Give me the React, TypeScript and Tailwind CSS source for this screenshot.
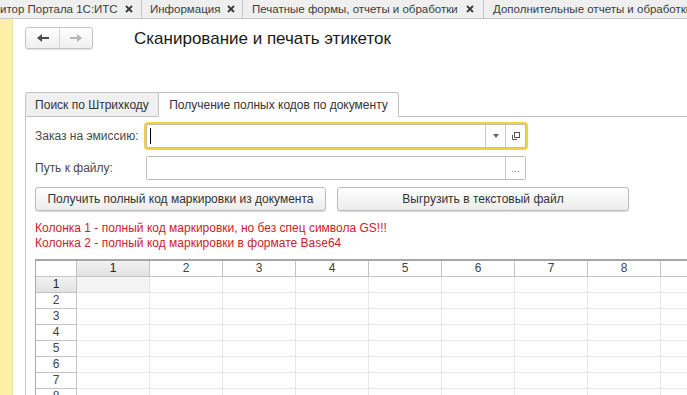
import React from "react";

function CloseX() {
  return (
    <svg width="8" height="8" viewBox="0 0 8 8" className="shrink-0">
      <path d="M1 1 L7 7 M7 1 L1 7" stroke="#3a3a3a" strokeWidth="1.8" />
    </svg>
  );
}

function ArrowLeft({ color }: { color: string }) {
  return (
    <svg width="12" height="8" viewBox="0 0 12 8">
      <polygon points="0,4 5,0 5,8" fill={color} />
      <rect x="4" y="3" width="8" height="2" fill={color} />
    </svg>
  );
}

function ArrowRight({ color }: { color: string }) {
  return (
    <svg width="12" height="8" viewBox="0 0 12 8">
      <polygon points="12,4 7,0 7,8" fill={color} />
      <rect x="0" y="3" width="8" height="2" fill={color} />
    </svg>
  );
}

function OpenIcon() {
  return (
    <svg width="11" height="11" viewBox="0 0 11 11">
      <rect x="4.5" y="1.5" width="5" height="5" fill="none" stroke="#555" strokeWidth="1" />
      <path d="M2.5 4 V8.5 H7" fill="none" stroke="#555" strokeWidth="1" />
    </svg>
  );
}

const cols = [1, 2, 3, 4, 5, 6, 7, 8];
const rows = [1, 2, 3, 4, 5, 6, 7, 8];

export default function App() {
  return (
    <div className="w-[687px] h-[395px] overflow-hidden bg-white font-['Liberation_Sans',Arial,sans-serif] text-[12px] text-[#333] flex flex-col">
      {/* Top tab bar */}
      <div className="flex h-[19px] shrink-0 bg-[#efefef] border-b border-[#c6c6c6] leading-[18px] text-[11.5px] text-[#3c3c3c] whitespace-nowrap">
        <div className="w-[142px] shrink-0 flex items-center justify-between pr-[8px] border-r border-[#c6c6c6]">
          <span>итор Портала 1С:ИТС</span>
          <CloseX />
        </div>
        <div className="w-[101px] shrink-0 flex items-center justify-between pl-[8px] pr-[7px] border-r border-[#c6c6c6]">
          <span>Информация</span>
          <CloseX />
        </div>
        <div className="w-[241px] shrink-0 flex items-center justify-between pl-[9px] pr-[9px] border-r border-[#c6c6c6]">
          <span>Печатные формы, отчеты и обработки</span>
          <CloseX />
        </div>
        <div className="flex-1 overflow-hidden pl-[9px] flex items-center">
          <span>Дополнительные отчеты и обработки</span>
        </div>
      </div>

      {/* Body */}
      <div className="flex flex-1 min-h-0">
        <div className="w-[13px] shrink-0 bg-[#fcefa8] border-r border-[#eadf9c]" />
        <div className="flex-1 min-w-0 pl-[12px] flex flex-col overflow-hidden">
          {/* Nav + title */}
          <div className="flex items-center mt-[8px] h-[22px] shrink-0">
            <div className="w-[68px] h-[22px] flex rounded-[3px] border border-[#c4c4c4] bg-gradient-to-b from-white to-[#efefef] shadow-[0_1px_1px_rgba(0,0,0,0.12)]">
              <div className="w-[34px] flex items-center justify-center border-r border-[#d6d6d6]">
                <ArrowLeft color="#4a4a4a" />
              </div>
              <div className="flex-1 flex items-center justify-center">
                <ArrowRight color="#b4b4b4" />
              </div>
            </div>
            <div className="ml-[41px] mt-[2px] text-[17px] text-[#1a1a1a] leading-[22px] whitespace-nowrap">
              Сканирование и печать этикеток
            </div>
          </div>

          {/* Tabs */}
          <div className="flex items-end h-[25px] mt-[43px] shrink-0 whitespace-nowrap">
            <div className="w-[134px] h-[25px] shrink-0 flex items-center justify-center bg-[#f0f0f0] border border-[#c2c2c2] rounded-tl-[3px] text-[#333]">
              Поиск по Штрихкоду
            </div>
            <div className="w-[240px] h-[25px] shrink-0 flex items-center justify-center bg-white border border-b-0 border-l-0 border-[#c2c2c2] rounded-tr-[3px] text-[#333]">
              Получение полных кодов по документу
            </div>
            <div className="flex-1 h-[25px] border-b border-[#c2c2c2]" />
          </div>

          {/* Panel */}
          <div className="flex-1 border-l border-[#c8c8c8] pl-[9px] flex flex-col min-h-0">
            <div className="flex items-center mt-[7px] h-[24px] shrink-0">
              <div className="w-[111px] shrink-0 text-[#4a4a4a] whitespace-nowrap">Заказ на эмиссию:</div>
              <div className="w-[380px] h-[24px] flex border border-[#bdbdbd] rounded-[2px] bg-white ring-2 ring-[#f2d23c]">
                <div className="flex-1 flex items-center pl-[3px]">
                  <div className="w-[1px] h-[16px] bg-black" />
                </div>
                <div className="w-[20px] flex items-center justify-center border-l border-[#c6c6c6]">
                  <svg width="6" height="4" viewBox="0 0 6 4">
                    <polygon points="0,0 6,0 3,4" fill="#666" />
                  </svg>
                </div>
                <div className="w-[20px] flex items-center justify-center border-l border-[#c6c6c6]">
                  <OpenIcon />
                </div>
              </div>
            </div>

            <div className="flex items-center mt-[8px] h-[24px] shrink-0">
              <div className="w-[111px] shrink-0 text-[#4a4a4a] whitespace-nowrap">Путь к файлу:</div>
              <div className="w-[380px] h-[24px] flex border border-[#bdbdbd] rounded-[2px] bg-white">
                <div className="flex-1" />
                <div className="w-[20px] flex items-end justify-center pb-[5px] border-l border-[#c6c6c6] text-[10px] leading-[10px] text-[#777]">
                  ...
                </div>
              </div>
            </div>

            <div className="flex mt-[7px] gap-[11px] shrink-0">
              <div className="w-[291px] h-[24px] flex items-center justify-center rounded-[3px] border border-[#bcbcbc] bg-gradient-to-b from-white to-[#ececec] shadow-[0_1px_1px_rgba(0,0,0,0.15)] text-[#333] whitespace-nowrap">
                Получить полный код маркировки из документа
              </div>
              <div className="w-[292px] h-[24px] flex items-center justify-center rounded-[3px] border border-[#bcbcbc] bg-gradient-to-b from-white to-[#ececec] shadow-[0_1px_1px_rgba(0,0,0,0.15)] text-[#333] whitespace-nowrap">
                Выгрузить в текстовый файл
              </div>
            </div>

            <div className="mt-[10px] text-[#d0202a] leading-[15px] whitespace-nowrap shrink-0">
              <div>Колонка 1 - полный код маркировки, но без спец символа GS!!!</div>
              <div>Колонка 2 - полный код маркировки в формате Base64</div>
            </div>

            {/* Spreadsheet */}
            <div className="mt-[8px] border-l border-[#a8a8a8] flex flex-col shrink-0">
              <div className="flex h-[18px] border-t-2 border-[#a6a6a6]">
                <div className="w-[41px] shrink-0 border-r border-b border-[#c4c4c4] bg-white" />
                {cols.map((c) => (
                  <div
                    key={c}
                    className={
                      c === 1
                        ? "w-[73px] shrink-0 flex items-center justify-center border-r border-b border-[#c4c4c4] bg-gradient-to-b from-[#f2f2f2] to-[#e2e2e2] text-[#222] leading-[15px]"
                        : "w-[73px] shrink-0 flex items-center justify-center border-r border-b border-[#c4c4c4] bg-white text-[#444] leading-[15px]"
                    }
                  >
                    {c}
                  </div>
                ))}
                <div className="w-[73px] shrink-0 border-b border-[#c4c4c4] bg-white" />
              </div>
              {rows.map((r) => (
                <div key={r} className="flex h-[16px]">
                  <div
                    className={
                      r === 1
                        ? "w-[41px] shrink-0 flex items-center justify-center border-r border-b border-[#c4c4c4] bg-gradient-to-b from-[#f2f2f2] to-[#e2e2e2] text-[#222] leading-[15px]"
                        : "w-[41px] shrink-0 flex items-center justify-center border-r border-b border-[#c4c4c4] bg-white text-[#444] leading-[15px]"
                    }
                  >
                    {r}
                  </div>
                  {cols.map((c) => (
                    <div
                      key={c}
                      className={
                        r === 1 && c === 1
                          ? "w-[73px] shrink-0 border-r border-b border-[#e4e4e4] bg-[#f4f4f4]"
                          : "w-[73px] shrink-0 border-r border-b border-[#e6e6e6] bg-white"
                      }
                    />
                  ))}
                  <div className="w-[73px] shrink-0 border-b border-[#e6e6e6] bg-white" />
                </div>
              ))}
            </div>
          </div>
        </div>
      </div>
    </div>
  );
}
